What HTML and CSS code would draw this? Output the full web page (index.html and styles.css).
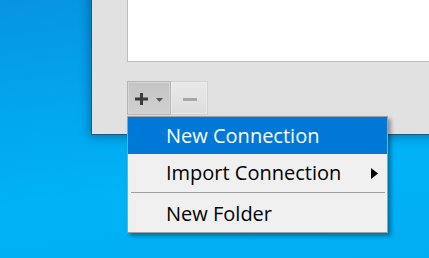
FILE: index.html
```html
<!DOCTYPE html>
<html>
<head>
<meta charset="utf-8">
<link rel="stylesheet" href="styles.css">
</head>
<body>
<div class="desktop">
  <div class="window">
    <div class="panel"></div>
    <div class="toolbar">
      <button class="tool tool-add">
        <svg class="plus" width="13" height="12" viewBox="0 0 13 12"><rect x="0" y="4.5" width="13" height="3" fill="#3a3a3a"/><rect x="5" y="0" width="3" height="12" fill="#3a3a3a"/></svg>
        <svg class="caret" width="7" height="4" viewBox="0 0 7 4"><polygon points="0,0 7,0 3.5,4" fill="#555"/></svg>
      </button>
      <button class="tool tool-remove">
        <svg width="14" height="3" viewBox="0 0 14 3"><rect x="0" y="0" width="14" height="3" fill="#a8a8a8"/></svg>
      </button>
    </div>
  </div>
  <div class="menu">
    <div class="menu-item active">New Connection</div>
    <div class="menu-item has-sub">Import Connection
      <svg class="sub-arrow" width="7" height="11" viewBox="0 0 7 11"><polygon points="0,0 7,5.5 0,11" fill="#000"/></svg>
    </div>
    <div class="menu-sep"></div>
    <div class="menu-item">New Folder</div>
  </div>
</div>
</body>
</html>
```

FILE: styles.css
```css
html, body {
  margin: 0;
  padding: 0;
}
body {
  width: 429px;
  height: 258px;
  overflow: hidden;
  font-family: "Open Sans", "Noto Sans", sans-serif;
}
.desktop {
  position: relative;
  width: 429px;
  height: 258px;
  overflow: hidden;
  background: linear-gradient(172deg, #0794e0 0%, #02a6ee 35%, #00b2f6 65%, #00aef3 100%);
}
.window {
  position: absolute;
  left: 91px;
  top: -20px;
  width: 400px;
  height: 155px;
  box-sizing: border-box;
  background: #e1e1e1;
  border-left: 1px solid #24577d;
  border-bottom: 1px solid #24577d;
  padding: 10px 0 0 35px;
  box-shadow: -2px 2px 10px rgba(0, 30, 70, 0.35);
  display: flex;
  flex-direction: column;
}
.panel {
  height: 72px;
  box-sizing: border-box;
  background: #fff;
  border: 1px solid #bdbdbd;
  flex: none;
}
.toolbar {
  margin-top: 19px;
  display: flex;
}
.tool {
  height: 34px;
  box-sizing: border-box;
  margin: 0;
  padding: 0;
  display: flex;
  align-items: center;
  justify-content: center;
}
.tool-add {
  width: 44px;
  gap: 8px;
  border: 1px solid #b6b6b6;
  background: linear-gradient(#c4c4c4, #d0d0d0);
  box-shadow: inset 0 0 0 1px #d6d6d6;
}
.tool-add .plus {
  margin-top: 2px;
}
.tool-add .caret {
  margin-top: 3px;
}
.tool-remove {
  width: 37px;
  border: 1px solid #d2d2d2;
  border-left: none;
  background: linear-gradient(#e9e9e9, #dddddd);
  box-shadow: inset 0 0 0 1px #ececec;
}
.tool-remove svg {
  margin-top: 2px;
  margin-left: 1px;
}
.menu {
  position: absolute;
  left: 127px;
  top: 116px;
  width: 261px;
  box-sizing: border-box;
  background: #f0f0f0;
  border: 1px solid #a0a0a0;
  box-shadow: 3px 3px 4px rgba(0, 0, 0, 0.35);
}
.menu-item {
  height: 37px;
  line-height: 37px;
  padding-left: 38px;
  font-size: 20px;
  color: #000;
  position: relative;
  white-space: nowrap;
}
.menu-item.active {
  background: #0078d7;
  color: #fff;
}
.sub-arrow {
  position: absolute;
  left: 243px;
  top: 14px;
}
.menu-sep {
  height: 1px;
  background: #a0a0a0;
  margin: 1px 2px 2px 3px;
}
```
